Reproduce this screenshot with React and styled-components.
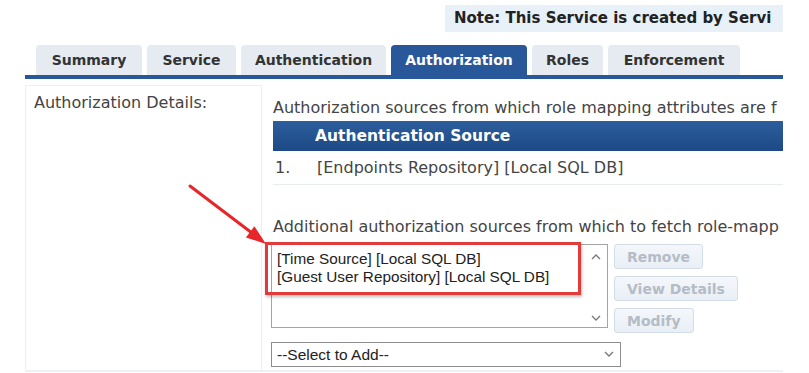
import React from 'react';
import styled, { createGlobalStyle } from 'styled-components';

const GlobalStyle = createGlobalStyle`
  body {
    margin: 0;
    background: #fff;
    font-family: "DejaVu Sans", Verdana, sans-serif;
    color: #333;
  }
`;

const Page = styled.div`
  position: relative;
  width: 758px;
  margin-left: 25px;
  padding-top: 5px;
`;

const NoteBar = styled.div`
  margin-left: auto;
  width: 329px;
  height: 27px;
  line-height: 27px;
  padding-left: 9px;
  background: #e8f0f8;
  font-weight: bold;
  font-size: 15px;
  color: #222;
  white-space: nowrap;
  overflow: hidden;
`;

const TabBar = styled.div`
  display: flex;
  gap: 5px;
  margin-top: 13px;
  padding-left: 11px;
  border-bottom: 4px solid #29589a;
`;

const Tab = styled.div`
  width: ${p => p.w}px;
  height: 30px;
  line-height: 31px;
  text-align: center;
  border-radius: 4px 4px 0 0;
  font-weight: bold;
  font-size: 14px;
  background: ${p => (p.active ? '#29589a' : '#e5ebf1')};
  color: ${p => (p.active ? '#fff' : '#333')};
`;

const Panel = styled.div`
  display: grid;
  grid-template-columns: 237px 1fr;
  margin-top: 6px;
  height: 285px;
  border-bottom: 2px solid #eef1f4;
`;

const LeftCell = styled.div`
  border: 1px solid #edf0f3;
  border-bottom: none;
  padding: 7px 8px;
  font-size: 16px;
  color: #444;
`;

const RightCell = styled.div`
  padding-left: 11px;
  padding-top: 15px;
  overflow: hidden;
  font-size: 16px;
  color: #444;
`;

const Line = styled.div`
  white-space: nowrap;
  height: 16px;
  line-height: 16px;
`;

const TableHead = styled.div`
  margin-top: 5px;
  height: 30px;
  line-height: 30px;
  padding-left: 42px;
  background: linear-gradient(#2c5d9c, #1d4a86);
  color: #fff;
  font-weight: bold;
  font-size: 15.5px;
`;

const TableRow = styled.div`
  display: flex;
  height: 33px;
  line-height: 34px;
  border-bottom: 1px solid #e8ebee;
  white-space: nowrap;
`;

const RowNum = styled.span`
  width: 42px;
  padding-left: 2px;
`;

const AddLabel = styled(Line)`
  margin-top: 34px;
`;

const EditArea = styled.div`
  display: flex;
  margin-top: 9px;
  margin-left: -2px;
  gap: 6px;
`;

const ListBox = styled.div`
  position: relative;
  width: 337px;
  height: 84px;
  border: 1px solid #a4a4a4;
  font-family: "Liberation Sans", Arial, sans-serif;
  font-size: 15.3px;
  color: #222;
  padding: 5px 0 0 5px;
  box-sizing: border-box;
`;

const ListItem = styled.div`
  height: 18px;
  line-height: 18px;
  white-space: nowrap;
`;

const ScrollArrow = styled.div`
  position: absolute;
  right: 4px;
  ${p => (p.down ? 'bottom: 4px;' : 'top: 6px;')}
  width: 14px;
  height: 10px;
  display: flex;
  align-items: center;
  justify-content: center;
`;

const ButtonStack = styled.div`
  display: flex;
  flex-direction: column;
  align-items: flex-start;
  gap: 7px;
`;

const Button = styled.button`
  height: 25px;
  padding: 0 12px;
  border: 1px solid #d3dde8;
  border-radius: 3px;
  background: linear-gradient(#f4f7fb, #e9eff6);
  color: #b4bcc6;
  font-family: "DejaVu Sans", Verdana, sans-serif;
  font-weight: bold;
  font-size: 14px;
`;

const SelectBox = styled.div`
  display: flex;
  align-items: center;
  justify-content: space-between;
  margin-top: 9px;
  margin-left: -2px;
  width: 350px;
  height: 25px;
  box-sizing: border-box;
  border: 1px solid #8d8d8d;
  padding: 0 6px 0 5px;
  font-family: "Liberation Sans", Arial, sans-serif;
  font-size: 15.5px;
  color: #222;
`;

const Highlight = styled.div`
  position: absolute;
  left: 240px;
  top: 242px;
  width: 310px;
  height: 47px;
  border: 3px solid #e23b3b;
  box-shadow: 1px 2px 3px rgba(0, 0, 0, 0.25);
  pointer-events: none;
`;

const Arrow = styled.svg`
  position: absolute;
  left: 160px;
  top: 180px;
  pointer-events: none;
`;

const Chevron = ({ up }) => (
  <svg width="10" height="7" viewBox="0 0 10 7">
    <path d={up ? 'M1 6 L5 2 L9 6' : 'M1 1 L5 5 L9 1'} fill="none" stroke="#777" strokeWidth="1.3" />
  </svg>
);

const tabs = [
  ['Summary', 106],
  ['Service', 89],
  ['Authentication', 145],
  ['Authorization', 136],
  ['Roles', 71],
  ['Enforcement', 132],
];

export default function App() {
  return (
    <Page>
      <GlobalStyle />
      <NoteBar>Note: This Service is created by Servi</NoteBar>
      <TabBar>
        {tabs.map(([t, w]) => (
          <Tab key={t} w={w} active={t === 'Authorization'}>{t}</Tab>
        ))}
      </TabBar>
      <Panel>
        <LeftCell>Authorization Details:</LeftCell>
        <RightCell>
          <Line>Authorization sources from which role mapping attributes are f</Line>
          <TableHead>Authentication Source</TableHead>
          <TableRow>
            <RowNum>1.</RowNum>
            <span>[Endpoints Repository] [Local SQL DB]</span>
          </TableRow>
          <AddLabel>Additional authorization sources from which to fetch role-mapp</AddLabel>
          <EditArea>
            <ListBox>
              <ListItem>[Time Source] [Local SQL DB]</ListItem>
              <ListItem>[Guest User Repository] [Local SQL DB]</ListItem>
              <ScrollArrow><Chevron up /></ScrollArrow>
              <ScrollArrow down><Chevron /></ScrollArrow>
            </ListBox>
            <ButtonStack>
              <Button disabled>Remove</Button>
              <Button disabled>View Details</Button>
              <Button disabled>Modify</Button>
            </ButtonStack>
          </EditArea>
          <SelectBox>
            <span>--Select to Add--</span>
            <Chevron />
          </SelectBox>
        </RightCell>
      </Panel>
      <Highlight />
      <Arrow width="100" height="80" viewBox="0 0 100 80">
        <line x1="5" y1="6" x2="67" y2="53" stroke="#e8262a" strokeWidth="3" strokeLinecap="round" />
        <polygon points="81,64 60.9,57.5 69.4,46.3" fill="#e8262a" />
      </Arrow>
    </Page>
  );
}
